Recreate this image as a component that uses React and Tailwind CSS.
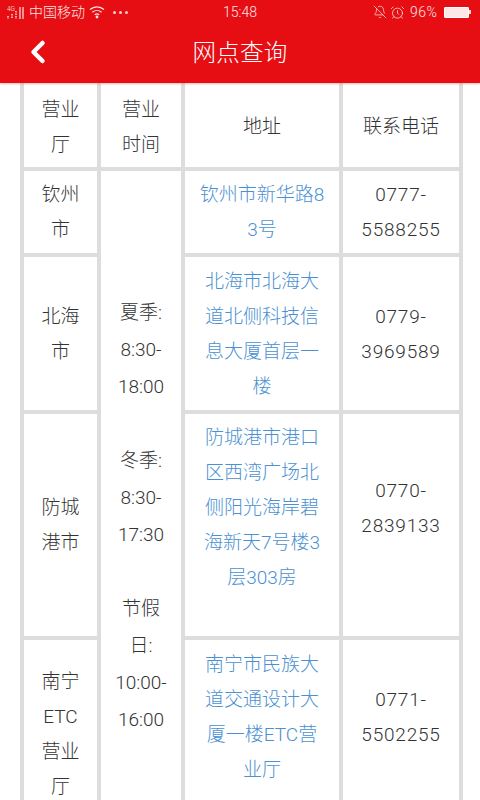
import React from 'react';
import { AlarmClock, BellOff, ChevronLeft } from 'lucide-react';

const FONT = { fontFamily: 'Roboto, "Noto Sans CJK SC", sans-serif' };

const HOURS = ['夏季:', '8:30-', '18:00', '', '冬季:', '8:30-', '17:30', '', '节假', '日:', '10:00-', '16:00'];

const ROWS = [
  { name: ['钦州', '市'], addr: '钦州市新华路83号', phone: ['0777-', '5588255'], height: 'h-[86px]' },
  { name: ['北海', '市'], addr: '北海市北海大道北侧科技信息大厦首层一楼', phone: ['0779-', '3969589'], height: 'h-[157px]' },
  { name: ['防城', '港市'], addr: '防城港市港口区西湾广场北侧阳光海岸碧海新天7号楼3层303房', phone: ['0770-', '2839133'], blank: true, height: 'h-[226px]' },
  { name: ['南宁', 'ETC', '营业', '厅'], addr: '南宁市民族大道交通设计大厦一楼ETC营业厅', phone: ['0771-', '5502255'], blank: true, height: 'h-[192px]' },
];

function StatusBar() {
  return (
    <div className="flex h-[24px] items-center text-[14px] font-light text-white/90">
      <div className="flex w-[184px] items-center pl-[7px]">
        <svg width="17" height="16" viewBox="0 0 17 16" fill="none" stroke="currentColor">
          <path d="M1 12v3M5 10v5M9 7v8" strokeWidth="1.4" strokeDasharray="1.5 1" />
          <path d="M13 3v12M16 3v12" strokeWidth="1.2" />
          <text x="0" y="7" fontSize="6.5" fill="currentColor" stroke="none">4G</text>
        </svg>
        <span className="ml-[5px]">中国移动</span>
        <svg className="ml-[4px]" width="16" height="14" viewBox="0 0 16 14" fill="none" stroke="currentColor" strokeWidth="1.2">
          <path d="M1 4.5c4-3.6 10-3.6 14 0" />
          <path d="M3.4 7.2c2.7-2.3 6.5-2.3 9.2 0" />
          <path d="M5.8 9.8c1.3-1.1 3.1-1.1 4.4 0" />
          <circle cx="8" cy="12" r="0.8" fill="currentColor" />
        </svg>
        <div className="ml-[8px] flex gap-[3px]">
          <span className="size-[3px] rounded-full bg-white/80" />
          <span className="size-[3px] rounded-full bg-white/80" />
          <span className="size-[3px] rounded-full bg-white/80" />
        </div>
      </div>
      <span className="w-[112px] text-center">15:48</span>
      <div className="flex flex-1 items-center pl-[77px]">
        <BellOff size={14} strokeWidth={1.2} />
        <AlarmClock size={15} strokeWidth={1.2} className="ml-[3px]" />
        <span className="ml-[5px] tracking-[0.5px]">96%</span>
        <div className="ml-[7px] h-[11px] w-[25px] rounded-[1px] border border-white bg-white/90" />
        <div className="h-[4px] w-[1.5px] bg-white/80" />
      </div>
    </div>
  );
}

function Lines({ lines }) {
  return lines.map((line, i) => <div key={i} className="h-[35px] leading-[35px]">{line}</div>);
}

export default function App() {
  const cell = 'border-[4px] border-[#dddddd] text-center align-middle';
  const head = 'border-t-0 pt-[4px]';

  return (
    <div className="h-[800px] overflow-hidden bg-white text-[19px] font-light text-[#333333]" style={FONT}>
      <header className="relative z-10 h-[83px] bg-[#e60d13] text-white shadow-[0_1px_2px_rgba(230,13,19,0.3)]">
        <StatusBar />
        <div className="relative flex h-[59px] items-center justify-center text-[23.5px]">
          <ChevronLeft size={36} strokeWidth={3} className="absolute left-[20px] top-[10px]" />
          <span className="tracking-[0.2px]">网点查询</span>
        </div>
      </header>

      <table className="ml-[20px] w-[439px] table-fixed border-collapse">
        <colgroup>
          <col className="w-[77px]" />
          <col className="w-[84px]" />
          <col className="w-[158px]" />
          <col className="w-[120px]" />
        </colgroup>
        <tbody>
          <tr className="h-[86px]">
            <td className={`${cell} ${head}`}><Lines lines={['营业', '厅']} /></td>
            <td className={`${cell} ${head}`}><Lines lines={['营业', '时间']} /></td>
            <td className={`${cell} ${head}`}>地址</td>
            <td className={`${cell} ${head}`}>联系电话</td>
          </tr>
          {ROWS.map((row, i) => (
            <tr key={i} className={row.height}>
              <td className={cell}><Lines lines={row.name} /></td>
              {i === 0 && (
                <td rowSpan={4} className={`${cell} !align-top pt-[123px]`}>
                  {HOURS.map((line, j) => (
                    <div key={j} className="h-[37px] leading-[37px]">{line}</div>
                  ))}
                </td>
              )}
              <td className={`${cell} break-all px-[13px] leading-[35px] text-[#4a90d2]`}>
                {row.addr}
                {row.blank && <div className="h-[35px]" />}
              </td>
              <td className={`${cell} tracking-[0.8px]`}>
                <Lines lines={row.phone} />
                {row.blank && <div className="h-[35px]" />}
              </td>
            </tr>
          ))}
        </tbody>
      </table>
    </div>
  );
}
